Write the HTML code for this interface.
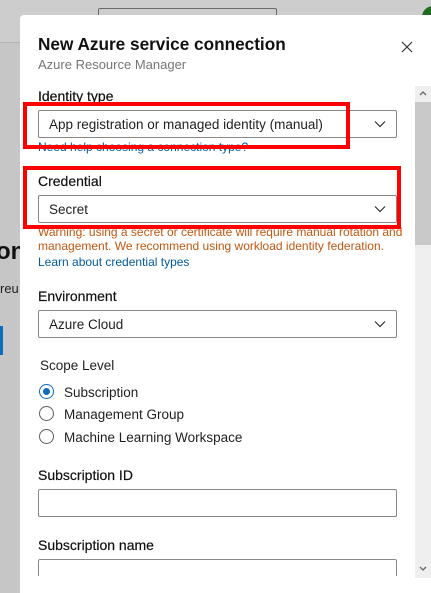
<!DOCTYPE html>
<html><head><meta charset="utf-8"><style>
*{box-sizing:border-box;margin:0;padding:0}
body{width:431px;height:593px;overflow:hidden;background:#c6c6c6;font-family:"Liberation Sans",sans-serif;position:relative;color:#201f1e}
.abs{position:absolute}
.panel{left:20px;top:15px;width:411px;height:578px;background:#fff;border-top-left-radius:4px}
.t{position:absolute;white-space:nowrap}
.lbl{font-size:14px;color:#111;-webkit-text-stroke:0.2px #111}
.box{position:absolute;left:38px;width:359px;height:28px;border:1px solid #8a8886;border-radius:2px;background:#fff}
.box span{position:absolute;left:10px;top:6px;font-size:13.5px}
.chev{position:absolute;right:10px;top:9px}
.red{position:absolute;border:4px solid #f00}
.radio{position:absolute;left:39px;width:15px;height:15px;border:1px solid #605e5c;border-radius:50%;background:#fff}
.rl{position:absolute;left:64px;font-size:13.5px}
a{color:#005a9e}
</style></head><body>
<div class="abs" style="left:0;top:0;width:431px;height:43px;background:#cdcdcd;border-bottom:1px solid #b5b5b5"></div>
<div class="abs" style="left:98px;top:8px;width:179px;height:12px;border:1px solid #6a6a6a;border-bottom:none;border-radius:2px 2px 0 0;background:#cdcdcd"></div>
<div class="abs" style="left:422px;top:6px;width:22px;height:22px;border-radius:50%;background:#1f6b1f"></div>
<div class="t" style="left:-4px;top:238px;font-size:24px;font-weight:700;color:#111">on</div>
<div class="t" style="left:0;top:281px;font-size:13px;color:#222">reu</div>
<div class="abs" style="left:0;top:326px;width:3px;height:29px;background:#0f6cbd"></div>

<div class="abs panel"></div>
<div class="t" style="left:38px;top:34px;font-size:17.2px;font-weight:700;color:#111">New Azure service connection</div>
<div class="t" style="left:38px;top:57px;font-size:13px;color:#757575">Azure Resource Manager</div>
<svg class="abs" style="left:401px;top:41px" width="12" height="12" viewBox="0 0 12 12"><path d="M1 1L11 11M11 1L1 11" stroke="#333" stroke-width="1.2"/></svg>

<div class="t lbl" style="left:38px;top:88px">Identity type</div>
<div class="box" style="top:110px"><span>App registration or managed identity (manual)</span><svg class="chev" width="12" height="8" viewBox="0 0 12 8"><path d="M1 1.5L6 6.5L11 1.5" stroke="#333" fill="none" stroke-width="1.2"/></svg></div>
<div class="t" style="left:38px;top:140px;font-size:12px"><a>Need help choosing a connection type?</a></div>
<div class="red" style="left:23px;top:102px;width:327px;height:47px"></div>

<div class="t lbl" style="left:38px;top:173px">Credential</div>
<div class="box" style="top:195px"><span>Secret</span><svg class="chev" width="12" height="8" viewBox="0 0 12 8"><path d="M1 1.5L6 6.5L11 1.5" stroke="#333" fill="none" stroke-width="1.2"/></svg></div>
<div class="t" style="left:38px;top:225px;font-size:12px;color:#c0570f;line-height:14px">Warning: using a secret or certificate will require manual rotation and<br>management. We recommend using workload identity federation.</div>
<div class="t" style="left:38px;top:255px;font-size:12px"><a>Learn about credential types</a></div>
<div class="red" style="left:23px;top:166px;width:378px;height:63px"></div>

<div class="t lbl" style="left:38px;top:288px">Environment</div>
<div class="box" style="top:310px"><span>Azure Cloud</span><svg class="chev" width="12" height="8" viewBox="0 0 12 8"><path d="M1 1.5L6 6.5L11 1.5" stroke="#333" fill="none" stroke-width="1.2"/></svg></div>

<div class="t" style="left:40px;top:358px;font-size:13.5px">Scope Level</div>
<div class="radio" style="top:384px;border-color:#0f6cbd"><div style="position:absolute;left:3px;top:3px;width:7px;height:7px;border-radius:50%;background:#0f6cbd"></div></div>
<div class="rl" style="top:385px">Subscription</div>
<div class="radio" style="top:406px"></div>
<div class="rl" style="top:407px">Management Group</div>
<div class="radio" style="top:429px"></div>
<div class="rl" style="top:430px">Machine Learning Workspace</div>

<div class="t lbl" style="left:38px;top:467px">Subscription ID</div>
<div class="box" style="top:489px"></div>
<div class="t lbl" style="left:38px;top:537px">Subscription name</div>
<div class="box" style="top:559px;height:30px"></div>
<div class="abs" style="left:20px;top:576px;width:395px;height:17px;background:#fff"></div>

<div class="abs" style="left:415px;top:86px;width:16px;height:492px;background:#efefef"></div>
<div class="abs" style="left:415px;top:102px;width:16px;height:143px;background:#c9c9c9"></div>
<svg class="abs" style="left:419px;top:91px" width="8" height="5" viewBox="0 0 8 5"><path d="M1 4L4 1L7 4" stroke="#666" fill="none" stroke-width="1.3"/></svg>
<svg class="abs" style="left:419px;top:566px" width="8" height="5" viewBox="0 0 8 5"><path d="M1 1L4 4L7 1" stroke="#666" fill="none" stroke-width="1.3"/></svg>
</body></html>
